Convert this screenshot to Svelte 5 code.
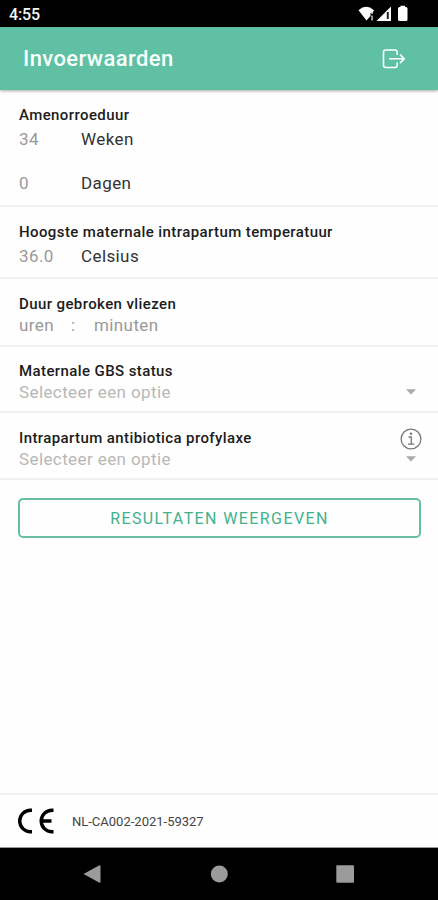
<script lang="ts">
	let weeks = '34';
	let days = '0';
	let temperature = '36.0';
	let code = 'NL-CA002-2021-59327';
</script>

<div class="screen">
	<div class="status">
		<span class="clock">4:55</span>
		<svg class="status-icons" width="52" height="18" viewBox="0 0 52 18">
			<path d="M0.5 5.2Q8 -1.600 16 5.200L14.500 8H12.500V11L8.500 15.500Z" fill="#fff" />
			<path d="M14 7v2M14 10.500v5" stroke="#bbb" stroke-width="1.600" />
			<path d="M18.500 16L33 1.500V16Z" fill="#fff" />
			<path d="M29.800 7v7" stroke="#222" stroke-width="2" />
			<path d="M42.500 2V0.700h4.500V2h1q1.500 0 1.500 1.500v11q0 1.500-1.500 1.500h-6.500q-1.500 0-1.500-1.500v-11Q40 2 41.500 2Z" fill="#fff" />
		</svg>
	</div>

	<header>
		<h1>Invoerwaarden</h1>
		<button class="logout" aria-label="Uitloggen">
			<svg width="24" height="22" viewBox="0 0 24 22" fill="none" stroke="#fff" stroke-width="1.600">
				<path d="M15.200 7V4.200Q15.200 2 13 2H3.700Q1.500 2 1.500 4.200V17.300Q1.500 19.500 3.700 19.500H13Q15.200 19.500 15.200 17.300V14.500" />
				<path d="M7 10.800H21.500M18 6.500L22.200 10.800L18 15.100" />
			</svg>
		</button>
	</header>

	<main>
		<section class="duration">
			<h2>Amenorroeduur</h2>
			<div class="row"><span class="value">{weeks}</span><span>Weken</span></div>
			<div class="row"><span class="value">{days}</span><span>Dagen</span></div>
		</section>

		<section class="temperature">
			<h2>Hoogste maternale intrapartum temperatuur</h2>
			<div class="row"><span class="value">{temperature}</span><span>Celsius</span></div>
		</section>

		<section class="membranes">
			<h2>Duur gebroken vliezen</h2>
			<div class="time"><span>uren</span><span class="colon">:</span><span>minuten</span></div>
		</section>

		<section class="gbs">
			<h2>Maternale GBS status</h2>
			<div class="select">
				<span>Selecteer een optie</span>
				<svg width="10" height="6" viewBox="0 0 10 6"><path d="M0 0.300H10L5 5.600Z" fill="#aaa" /></svg>
			</div>
		</section>

		<section class="antibiotics">
			<h2>Intrapartum antibiotica profylaxe</h2>
			<div class="select">
				<span>Selecteer een optie</span>
				<svg width="10" height="6" viewBox="0 0 10 6"><path d="M0 0.300H10L5 5.600Z" fill="#aaa" /></svg>
			</div>
			<button class="info" aria-label="Informatie">
				<svg width="22" height="22" viewBox="0 0 22 22" fill="none" stroke="#777">
					<circle cx="11" cy="11" r="9.900" stroke-width="1.300" />
					<path d="M8.500 9H11.300V16M8 16.200H14.300" stroke-width="1.300" />
					<circle cx="11" cy="5.700" r="1.200" fill="#777" stroke="none" />
				</svg>
			</button>
		</section>

		<button class="submit">RESULTATEN WEERGEVEN</button>
	</main>

	<footer>
		<svg width="37" height="26" viewBox="0 0 37 26" fill="none" stroke="#000" stroke-width="3.400">
			<path d="M14 2.200H12.500A10.800 10.800 0 0 0 12.500 23.800H14" />
			<path d="M35.500 2.200H34A10.800 10.800 0 0 0 34 23.800H35.500M23.500 13H33.500" />
		</svg>
		<span>{code}</span>
	</footer>

	<nav>
		<svg width="438" height="52" viewBox="0 0 438 52" fill="#9b9b9b">
			<path d="M83.500 26L99.500 17.200Q100.500 17 100.500 18V34Q100.500 35 99.500 34.800Z" />
			<circle cx="219.300" cy="26" r="8.500" />
			<rect x="336.300" y="17.300" width="17.700" height="17.500" rx="1" />
		</svg>
	</nav>
</div>

<style>
	:global(body) {
		margin: 0;
		background: #fefefe;
	}

	.screen {
		display: flex;
		flex-direction: column;
		width: 438px;
		height: 900px;
		overflow: hidden;
		font-family: Roboto, sans-serif;
		color: #333;
		background: #fefefe;
	}

	h1,
	h2 {
		margin: 0;
		font-weight: 500;
	}

	button {
		padding: 0;
		border: none;
		background: none;
		font-family: inherit;
	}

	svg {
		display: block;
		flex-shrink: 0;
	}

	.status {
		display: flex;
		justify-content: space-between;
		height: 27px;
		box-sizing: border-box;
		padding: 5px 28px 0 9px;
		background: #000;
	}

	.clock {
		font-size: 16px;
		line-height: 20px;
		font-weight: 500;
		letter-spacing: -0.1px;
		color: #f4f4f4;
	}

	header {
		display: flex;
		align-items: center;
		justify-content: space-between;
		height: 63px;
		flex-shrink: 0;
		box-sizing: border-box;
		padding: 0 32px 0 23px;
		background: #5fc0a3;
		box-shadow: 0 1px 3px rgba(0, 0, 0, 0.35);
	}

	h1 {
		font-size: 22px;
		line-height: 28px;
		letter-spacing: 0.4px;
		color: #f8fffc;
	}

	main {
		flex: 1;
		display: flex;
		flex-direction: column;
	}

	section {
		position: relative;
		box-sizing: border-box;
		padding: 15px 22px 0 19px;
		border-bottom: 2px solid #f0f0f0;
	}

	.duration {
		height: 117px;
	}

	.temperature {
		height: 72px;
	}

	.membranes {
		height: 68px;
	}

	.gbs {
		height: 66px;
		padding-top: 14px;
	}

	.antibiotics {
		height: 67px;
	}

	h2 {
		font-size: 15px;
		line-height: 20px;
		letter-spacing: 0.4px;
		color: #1c1c1c;
	}

	.row,
	.time,
	.select {
		display: flex;
		font-size: 17px;
		line-height: 22px;
		letter-spacing: 0.4px;
	}

	.row {
		margin-top: 3px;
	}

	.row + .row {
		margin-top: 22px;
	}

	.value {
		width: 62px;
		color: #999;
	}

	.time {
		color: #999;
	}

	.colon {
		width: 23px;
		padding-left: 17px;
	}

	.select {
		align-items: center;
		justify-content: space-between;
		color: #b8b8b8;
	}

	.info {
		position: absolute;
		top: 15px;
		right: 16px;
	}

	.submit {
		height: 40px;
		margin: 18px 17px 0 18px;
		border: 2px solid #66bfa1;
		border-radius: 5px;
		font-size: 16px;
		letter-spacing: 1.4px;
		color: #43b18c;
	}

	footer {
		display: flex;
		align-items: center;
		gap: 17px;
		height: 55px;
		flex-shrink: 0;
		box-sizing: border-box;
		padding-left: 18px;
		border-top: 2px solid #f0f0f0;
		border-bottom: 1px solid #999;
		font-size: 13px;
		color: #444;
	}

	nav {
		height: 52px;
		flex-shrink: 0;
		background: #000;
	}
</style>
